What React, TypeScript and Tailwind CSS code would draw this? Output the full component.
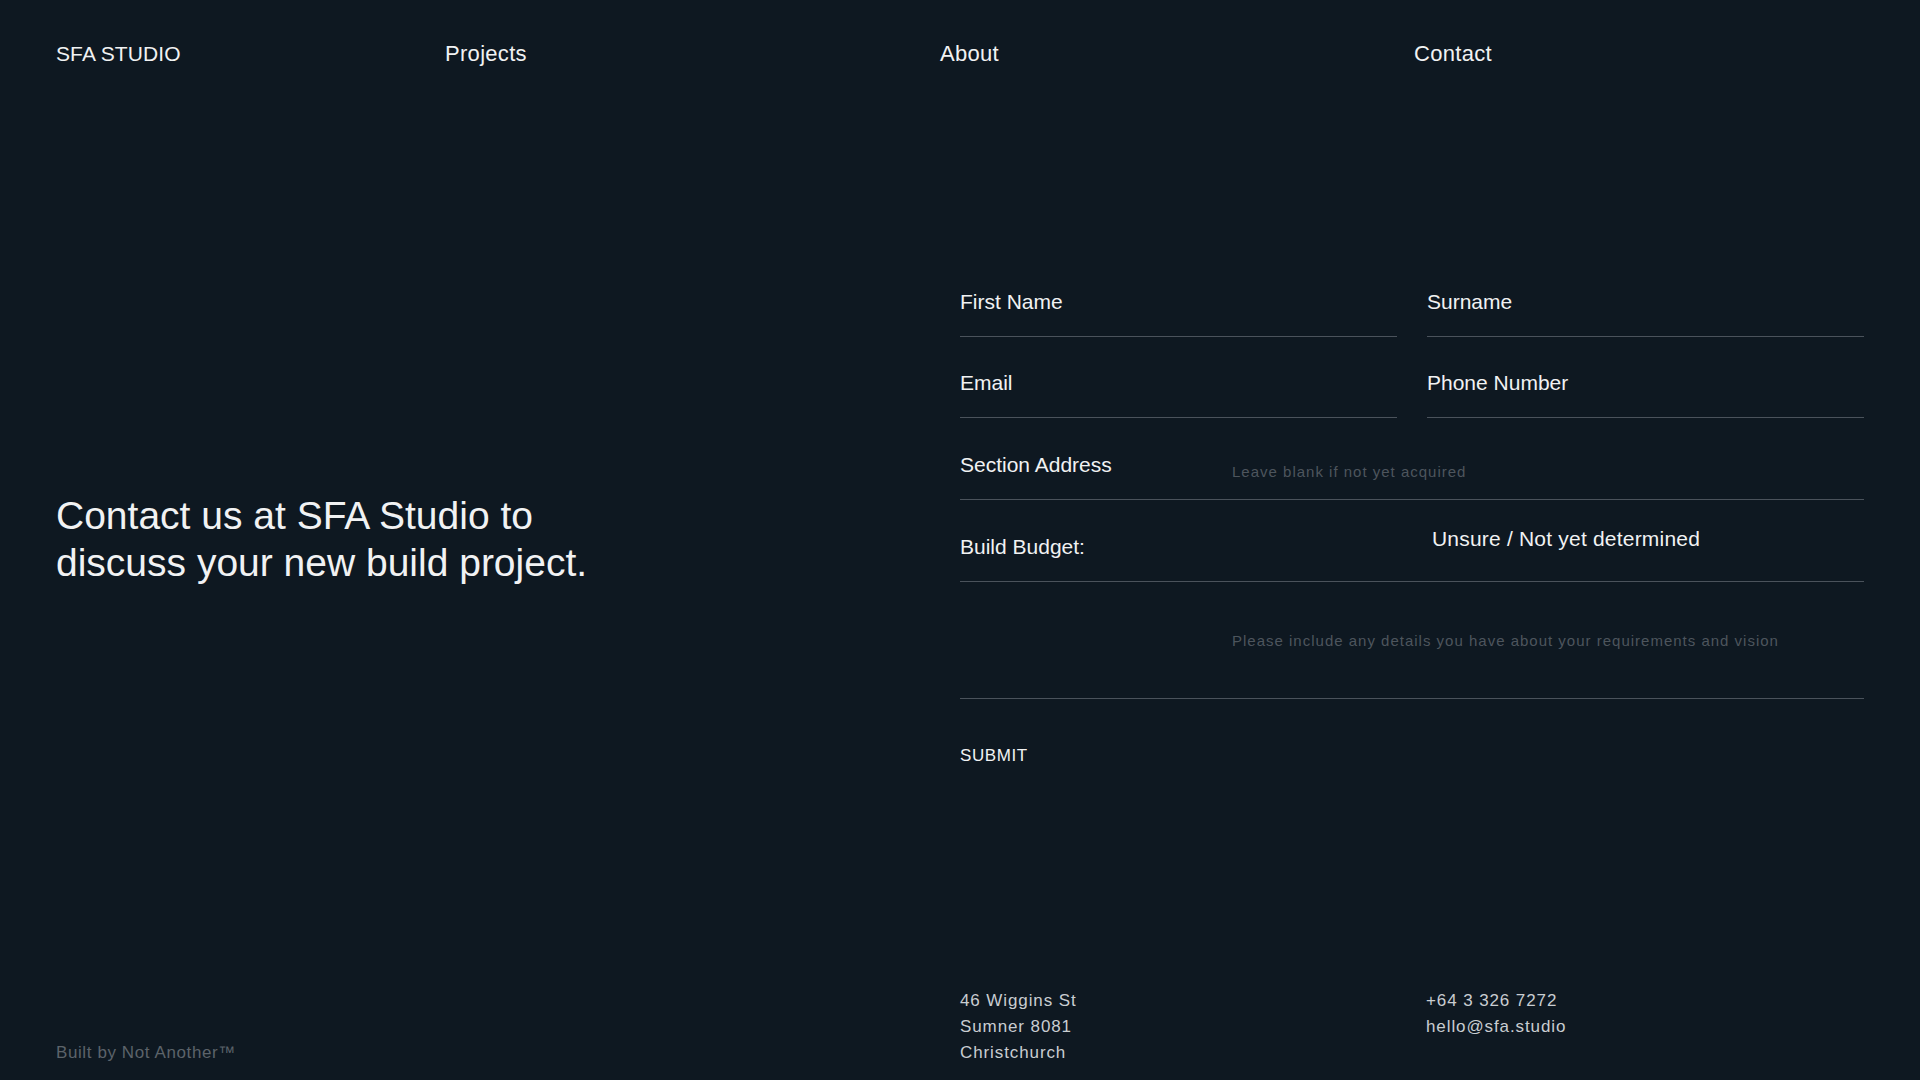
import React from 'react';

const font = { fontFamily: '"Liberation Sans", Arial, sans-serif' };

const App = () => {
  const nav = ['Projects', 'About', 'Contact'];

  return (
    <div
      className="h-[1080px] w-full bg-[#0e1821] text-[#f1f2f3] px-[56px] pt-[42px] pb-[14px] flex flex-col overflow-hidden"
      style={font}
    >
      {/* Header */}
      <header className="grid grid-cols-[389px_495px_474px_1fr] items-baseline text-[21px] leading-[24px]">
        <a href="#" className="tracking-[0.1px]">SFA STUDIO</a>
        {nav.map((item) => (
          <a key={item} href="#" className="text-[22px] tracking-[0.3px]">{item}</a>
        ))}
      </header>

      <div className="flex-1 grid grid-cols-2">
        {/* Left column */}
        <div className="flex flex-col">
          <h1 className="mt-[426px] text-[39px] leading-[47px] font-normal">
            Contact us at SFA Studio to
            <br />
            discuss your new build project.
          </h1>
          <p className="mt-auto text-[17px] leading-[26px] tracking-[0.6px] text-[#5c636a]">
            Built by Not Another™
          </p>
        </div>

        {/* Right column */}
        <div className="flex flex-col">
          <form className="mt-[189px] flex flex-col text-[21px] leading-[24px]">
            <div className="grid grid-cols-2 gap-[30px]">
              <div className="h-[82px] flex items-end pb-[22px] border-b border-[#4a525b]">
                <input
                  placeholder="First Name"
                  className="w-full h-[24px] bg-transparent outline-none placeholder:text-[#f1f2f3]"
                />
              </div>
              <div className="h-[82px] flex items-end pb-[22px] border-b border-[#4a525b]">
                <input
                  placeholder="Surname"
                  className="w-full h-[24px] bg-transparent outline-none placeholder:text-[#f1f2f3]"
                />
              </div>
            </div>
            <div className="grid grid-cols-2 gap-[30px]">
              <div className="h-[81px] flex items-end pb-[22px] border-b border-[#4a525b]">
                <input
                  placeholder="Email"
                  className="w-full h-[24px] bg-transparent outline-none placeholder:text-[#f1f2f3]"
                />
              </div>
              <div className="h-[81px] flex items-end pb-[22px] border-b border-[#4a525b]">
                <input
                  placeholder="Phone Number"
                  className="w-full h-[24px] bg-transparent outline-none placeholder:text-[#f1f2f3]"
                />
              </div>
            </div>
            <div className="h-[82px] grid grid-cols-[272px_1fr] items-end border-b border-[#4a525b]">
              <label className="pb-[22px]">Section Address</label>
              <div className="pb-[17px]">
                <input
                  placeholder="Leave blank if not yet acquired"
                  className="w-full h-[20px] text-[15px] leading-[20px] tracking-[1px] bg-transparent outline-none placeholder:text-[#4d555d]"
                />
              </div>
            </div>
            <div className="h-[82px] grid grid-cols-2 gap-[30px] items-end border-b border-[#4a525b]">
              <label className="pb-[22px]">Build Budget:</label>
              <div className="pb-[30px] pl-[5px]">
                <select className="appearance-none bg-transparent outline-none h-[24px] leading-[24px] tracking-[0.2px] text-[#f1f2f3]">
                  <option className="text-black">Unsure / Not yet determined</option>
                </select>
              </div>
            </div>
            <div className="h-[117px] grid grid-cols-[272px_1fr] border-b border-[#4a525b]">
              <div />
              <textarea
                placeholder="Please include any details you have about your requirements and vision"
                className="mt-[49px] h-[50px] resize-none text-[15px] leading-[20px] tracking-[1px] bg-transparent outline-none placeholder:text-[#4d555d]"
              />
            </div>
            <button
              type="submit"
              className="mt-[44px] self-start text-[17px] leading-[26px] tracking-[0.6px] text-[#f1f2f3]"
            >
              SUBMIT
            </button>
          </form>

          <footer className="mt-auto grid grid-cols-2 gap-[30px] text-[17px] leading-[26px] tracking-[0.9px] text-[#c9cdd1]">
            <div>
              <p>46 Wiggins St</p>
              <p>Sumner 8081</p>
              <p>Christchurch</p>
            </div>
            <div className="-ml-[1px]">
              <p>+64 3 326 7272</p>
              <p>hello@sfa.studio</p>
            </div>
          </footer>
        </div>
      </div>
    </div>
  );
};

export default App;
